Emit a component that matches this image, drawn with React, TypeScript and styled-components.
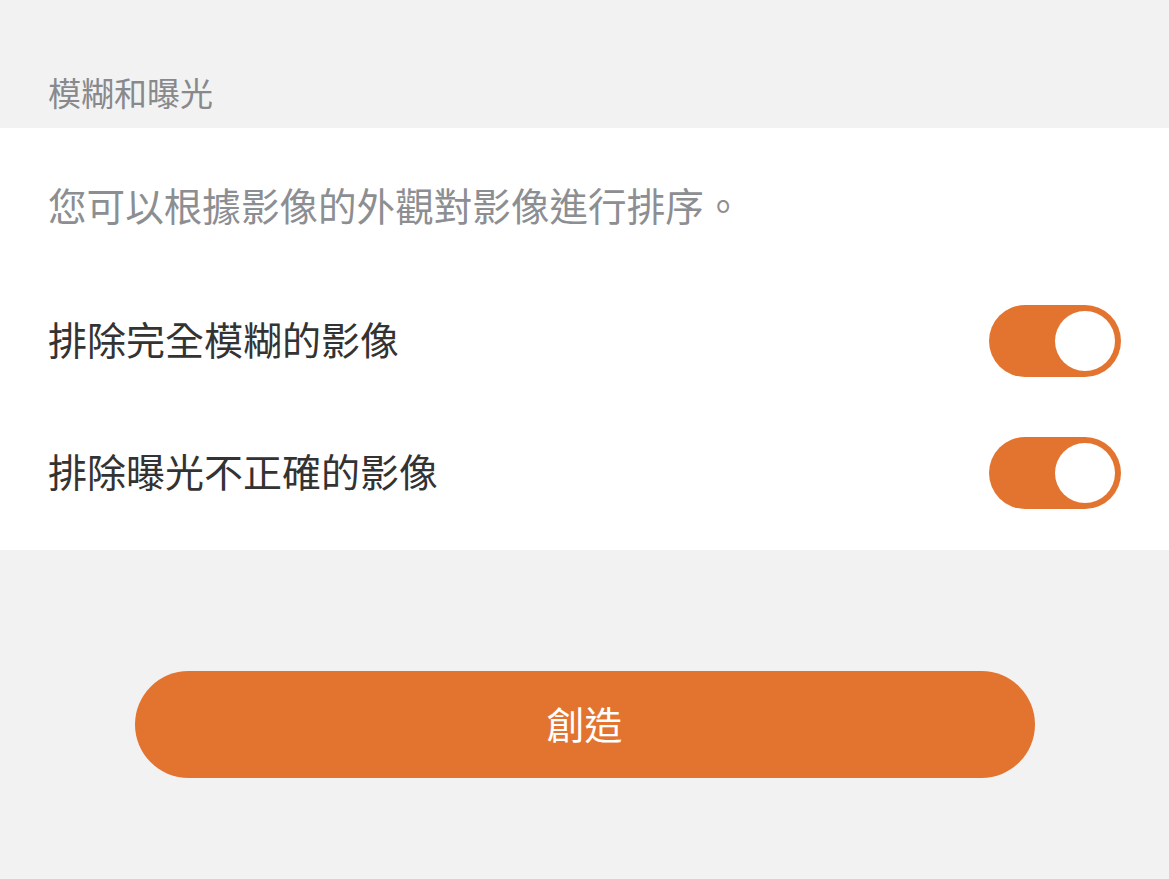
import React, { useState } from "react";
import styled, { createGlobalStyle } from "styled-components";

const Global = createGlobalStyle`
  html, body {
    margin: 0;
    padding: 0;
    background: #f2f2f2;
    font-family: "Noto Sans CJK TC", "Noto Sans CJK SC", "Noto Sans", sans-serif;
  }
`;

const Page = styled.div`
  min-height: 879px;
  background: #f2f2f2;
  display: flex;
  flex-direction: column;
`;

const SectionHeader = styled.div`
  height: 128px;
  box-sizing: border-box;
  display: flex;
  align-items: flex-end;
  padding: 0 48px 13px;
  font-size: 33px;
  line-height: 46px;
  color: #87898d;
`;

const Panel = styled.section`
  background: #ffffff;
  padding: 51px 0 11px;
  display: flex;
  flex-direction: column;
`;

const Description = styled.p`
  margin: 0 0 46px;
  padding: 0 48px;
  font-size: 38.6px;
  line-height: 50px;
  color: #8c8e92;
`;

const Row = styled.div`
  height: 132px;
  display: flex;
  align-items: center;
  justify-content: space-between;
  padding: 0 48px;
`;

const RowLabel = styled.span`
  font-size: 39px;
  line-height: 50px;
  padding-bottom: 7px;
  color: #333333;
`;

const SwitchTrack = styled.button<{ $on: boolean }>`
  width: 132px;
  height: 72px;
  border-radius: 36px;
  border: none;
  padding: 6px;
  box-sizing: border-box;
  background: ${(p) => (p.$on ? "#e3742f" : "#d6d6d6")};
  display: flex;
  justify-content: ${(p) => (p.$on ? "flex-end" : "flex-start")};
  align-items: center;
  cursor: pointer;
`;

const Knob = styled.span`
  width: 60px;
  height: 60px;
  border-radius: 50%;
  background: #ffffff;
`;

const Footer = styled.div`
  display: flex;
  justify-content: center;
  padding-top: 121px;
`;

const PrimaryButton = styled.button`
  width: 900px;
  height: 107px;
  border-radius: 54px;
  border: none;
  padding: 0 0 4px;
  background: #e3742f;
  color: #ffffff;
  font-family: inherit;
  font-size: 38px;
  line-height: 50px;
  cursor: pointer;
`;

function Toggle({ initial }: { initial: boolean }) {
  const [on, setOn] = useState(initial);
  return (
    <SwitchTrack $on={on} onClick={() => setOn(!on)} aria-pressed={on}>
      <Knob />
    </SwitchTrack>
  );
}

export default function App() {
  return (
    <>
      <Global />
      <Page>
        <SectionHeader>模糊和曝光</SectionHeader>
        <Panel>
          <Description>您可以根據影像的外觀對影像進行排序。</Description>
          <Row>
            <RowLabel>排除完全模糊的影像</RowLabel>
            <Toggle initial={true} />
          </Row>
          <Row>
            <RowLabel>排除曝光不正確的影像</RowLabel>
            <Toggle initial={true} />
          </Row>
        </Panel>
        <Footer>
          <PrimaryButton>創造</PrimaryButton>
        </Footer>
      </Page>
    </>
  );
}
